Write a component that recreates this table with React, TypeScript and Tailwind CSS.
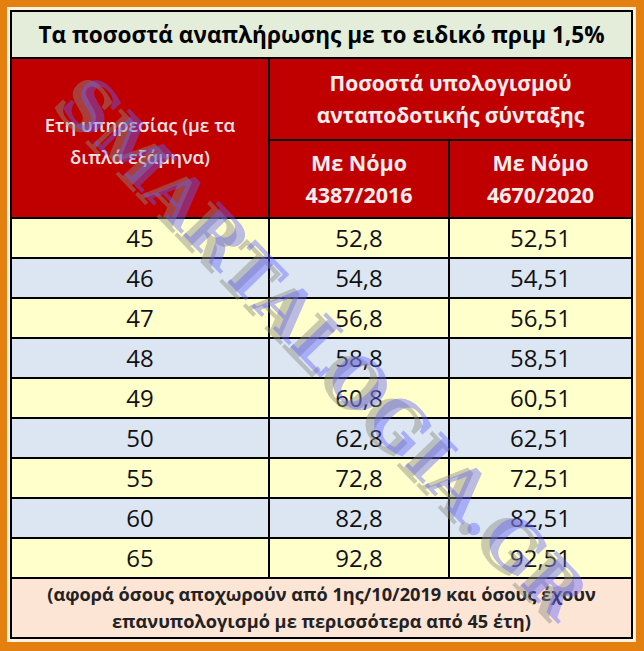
import React from "react";

const rows = [
  ["45", "52,8", "52,51"],
  ["46", "54,8", "54,51"],
  ["47", "56,8", "56,51"],
  ["48", "58,8", "58,51"],
  ["49", "60,8", "60,51"],
  ["50", "62,8", "62,51"],
  ["55", "72,8", "72,51"],
  ["60", "82,8", "82,51"],
  ["65", "92,8", "92,51"],
];

export default function App() {
  return (
    <div className="relative w-[644px] h-[651px] overflow-hidden bg-[#e3800f] pl-[7px] pt-[7px] pr-[8px] pb-[9px] font-['Open_Sans',sans-serif]">
      <div className="bg-[#fdf1de] p-[3px]">
        <div className="border-2 border-black">
          <div className="grid grid-cols-[256px_178px_181px] grid-rows-[45px_80px_76px_repeat(9,38px)_58px] gap-[2px] bg-black">
            {/* title */}
            <div className="col-span-3 flex items-center justify-center bg-[#e3edda] text-[22.6px] font-bold text-black">
              Τα ποσοστά αναπλήρωσης με το ειδικό πριμ 1,5%
            </div>

            {/* header */}
            <div className="row-span-2 flex items-center justify-center bg-[#c00000] pt-[6px] text-center text-[18.5px] font-semibold leading-[32px] text-[#f5e6ea]">
              Ετη υπηρεσίας (με τα
              <br />
              διπλά εξάμηνα)
            </div>
            <div className="col-span-2 flex items-center justify-center bg-[#c00000] text-center text-[21px] font-bold leading-[32px] text-[#f7eded]">
              Ποσοστά υπολογισμού
              <br />
              ανταποδοτικής σύνταξης
            </div>
            <div className="flex items-center justify-center bg-[#c00000] text-center text-[21.5px] font-bold leading-[32px] text-[#f7eded]">
              Με Νόμο
              <br />
              4387/2016
            </div>
            <div className="flex items-center justify-center bg-[#c00000] text-center text-[21.5px] font-bold leading-[32px] text-[#f7eded]">
              Με Νόμο
              <br />
              4670/2020
            </div>

            {/* data */}
            {rows.map((r, i) =>
              r.map((v, j) => (
                <div
                  key={`${i}-${j}`}
                  className={`flex items-center justify-center text-[24px] text-[#111] ${
                    i % 2 === 0 ? "bg-[#ffffcc]" : "bg-[#dce6f2]"
                  }`}
                >
                  {v}
                </div>
              ))
            )}

            {/* footnote */}
            <div className="col-span-3 flex items-center justify-center bg-[#fde5d6] text-center text-[18.2px] font-bold leading-[27px] text-[#222]">
              (αφορά όσους αποχωρούν από 1ης/10/2019 και όσους έχουν
              <br />
              επανυπολογισμό με περισσότερα από 45 έτη)
            </div>
          </div>
        </div>
      </div>

      {/* watermark */}
      <div className="pointer-events-none absolute left-[325px] top-[348px] -translate-x-1/2 -translate-y-1/2 rotate-[46deg] whitespace-nowrap font-['DejaVu_Serif',serif] text-[68px] font-bold leading-none text-[rgba(95,95,255,0.42)] [text-shadow:-6px_6px_0_rgba(140,140,130,0.45)]">
        SMARTALOGIA.GR
      </div>
    </div>
  );
}
